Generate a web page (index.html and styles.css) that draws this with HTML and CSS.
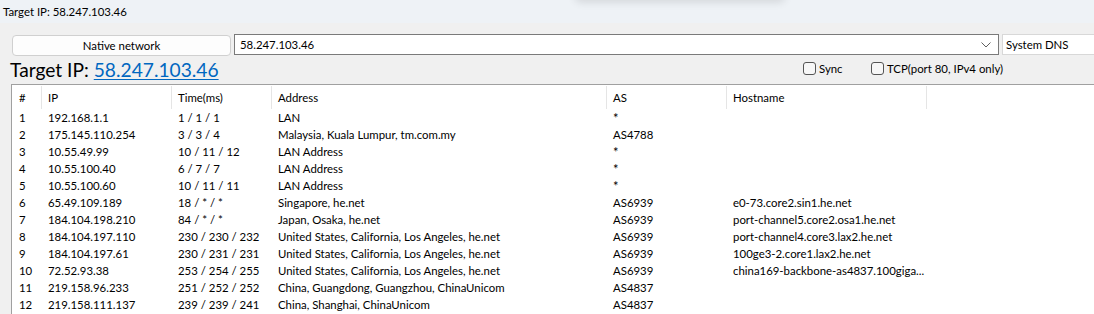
FILE: index.html
```html
<!DOCTYPE html>
<html>

<head>
  <meta charset="utf-8" />
  <title>Target IP: 58.247.103.46</title>
  <link rel="stylesheet" href="styles.css">
</head>

<body>
  <div class="titlebar">Target IP: 58.247.103.46</div>
  <div class="shade"></div>

  <div class="toolbar">
    <div class="btn">Native network</div>
    <div class="combo">
      <span class="ip">58.247.103.46</span>
      <svg class="chev" width="10" height="6" viewBox="0 0 10 6">
        <path d="M0.5 0.5 L5 5 L9.5 0.5" fill="none" stroke="#606060" stroke-width="1" />
      </svg>
    </div>
    <div class="dns">System DNS</div>
  </div>

  <div class="infoline">
    <div class="bigtitle">Target IP: <a href="#">58.247.103.46</a></div>
    <label class="check check-sync"><span class="box"></span>Sync</label>
    <label class="check"><span class="box"></span>TCP(port 80, IPv4 only)</label>
  </div>

  <div class="tablewrap">
    <table class="hops">
      <colgroup>
        <col class="c-num">
        <col class="c-ip">
        <col class="c-time">
        <col class="c-addr">
        <col class="c-as">
        <col class="c-host">
        <col class="c-rest">
      </colgroup>
      <thead>
        <tr>
          <th>#</th>
          <th>IP</th>
          <th>Time(ms)</th>
          <th>Address</th>
          <th>AS</th>
          <th>Hostname</th>
          <th></th>
        </tr>
      </thead>
      <tbody>
        <tr><td>1</td><td class="ip">192.168.1.1</td><td>1 / 1 / 1</td><td>LAN</td><td class="star">*</td><td></td><td></td></tr>
        <tr><td>2</td><td class="ip">175.145.110.254</td><td>3 / 3 / 4</td><td>Malaysia, Kuala Lumpur, tm.com.my</td><td>AS4788</td><td></td><td></td></tr>
        <tr><td>3</td><td class="ip">10.55.49.99</td><td>10 / 11 / 12</td><td>LAN Address</td><td class="star">*</td><td></td><td></td></tr>
        <tr><td>4</td><td class="ip">10.55.100.40</td><td>6 / 7 / 7</td><td>LAN Address</td><td class="star">*</td><td></td><td></td></tr>
        <tr><td>5</td><td class="ip">10.55.100.60</td><td>10 / 11 / 11</td><td>LAN Address</td><td class="star">*</td><td></td><td></td></tr>
        <tr><td>6</td><td class="ip">65.49.109.189</td><td>18 / * / *</td><td>Singapore, he.net</td><td>AS6939</td><td>e0-73.core2.sin1.he.net</td><td></td></tr>
        <tr><td>7</td><td class="ip">184.104.198.210</td><td>84 / * / *</td><td>Japan, Osaka, he.net</td><td>AS6939</td><td>port-channel5.core2.osa1.he.net</td><td></td></tr>
        <tr><td>8</td><td class="ip">184.104.197.110</td><td>230 / 230 / 232</td><td>United States, California, Los Angeles, he.net</td><td>AS6939</td><td>port-channel4.core3.lax2.he.net</td><td></td></tr>
        <tr><td>9</td><td class="ip">184.104.197.61</td><td>230 / 231 / 231</td><td>United States, California, Los Angeles, he.net</td><td>AS6939</td><td>100ge3-2.core1.lax2.he.net</td><td></td></tr>
        <tr><td>10</td><td class="ip">72.52.93.38</td><td>253 / 254 / 255</td><td>United States, California, Los Angeles, he.net</td><td>AS6939</td><td>china169-backbone-as4837.100giga...</td><td></td></tr>
        <tr><td>11</td><td class="ip">219.158.96.233</td><td>251 / 252 / 252</td><td>China, Guangdong, Guangzhou, ChinaUnicom</td><td>AS4837</td><td></td><td></td></tr>
        <tr><td>12</td><td class="ip">219.158.111.137</td><td>239 / 239 / 241</td><td>China, Shanghai, ChinaUnicom</td><td>AS4837</td><td></td><td></td></tr>
      </tbody>
    </table>
  </div>
</body>

</html>
```

FILE: styles.css
```css
body {
  margin: 0;
  padding: 0;
  background-color: #f0f0f0;
  font-family: Lato, "Noto Sans", sans-serif;
  font-size: 11.4px;
  color: black;
  overflow: hidden;
}

.titlebar {
  height: 23px;
  line-height: 23px;
  padding-left: 3px;
  background-color: #eef2f6;
}

.shade {
  position: absolute;
  top: -10px;
  left: 575px;
  width: 210px;
  height: 10px;
  border-radius: 6px;
  box-shadow: 0 2px 8px rgba(0, 0, 0, 0.12);
}

.toolbar {
  display: flex;
  align-items: flex-start;
  gap: 3px;
  padding: 11px 0 0 12px;
}

.btn {
  width: 217px;
  height: 19px;
  margin-top: 1px;
  line-height: 19px;
  text-align: center;
  background-color: #fdfdfd;
  border: 1px solid #d0d0d0;
  border-radius: 4px;
}

.combo {
  display: flex;
  align-items: center;
  justify-content: space-between;
  width: 751px;
  height: 19px;
  padding: 0 7px 0 5px;
  background-color: white;
  border: 1px solid #7a7a7a;
}

.dns {
  flex: 1;
  height: 19px;
  line-height: 19px;
  padding-left: 3px;
  background-color: white;
  border: 1px solid #d8d8d8;
  border-right: 0;
}

.infoline {
  display: flex;
  align-items: center;
  height: 28px;
  padding-left: 10px;
}

.bigtitle {
  font-size: 19.2px;
  line-height: 28px;
  width: 793px;
}

.bigtitle a {
  color: #0067c0;
  text-decoration: underline;
  text-underline-offset: 2px;
}

.check {
  display: flex;
  align-items: center;
  margin-top: -3px;
}

.check-sync {
  width: 68px;
}

.box {
  width: 11px;
  height: 11px;
  margin-right: 3px;
  border: 1px solid #555;
  border-radius: 3px;
  background-color: #f7f7f7;
}

.tablewrap {
  margin-left: 11px;
  background-color: white;
  border-top: 1px solid #a0a0a0;
  border-left: 1px solid #a0a0a0;
  height: 240px;
}

.hops {
  border-collapse: collapse;
  table-layout: fixed;
  width: 1083px;
}

.c-num { width: 30px; }
.c-ip { width: 130px; }
.c-time { width: 100px; }
.c-addr { width: 335px; }
.c-as { width: 120px; }
.c-host { width: 200px; }

.hops th {
  height: 24px;
  padding: 0 0 0 6px;
  text-align: left;
  font-weight: normal;
  white-space: nowrap;
  background-image: linear-gradient(#e5e5e5, #e5e5e5);
  background-size: 1px 23px;
  background-position: right 1px;
  background-repeat: no-repeat;
}

.hops th:first-child {
  padding-left: 7px;
}

.hops th:last-child {
  background-image: none;
}

.hops td {
  height: 17px;
  padding: 0 0 0 6px;
  white-space: nowrap;
  overflow: visible;
}

.hops td:first-child {
  padding-left: 7px;
}

.hops td.star {
  font-size: 13px;
}
```
